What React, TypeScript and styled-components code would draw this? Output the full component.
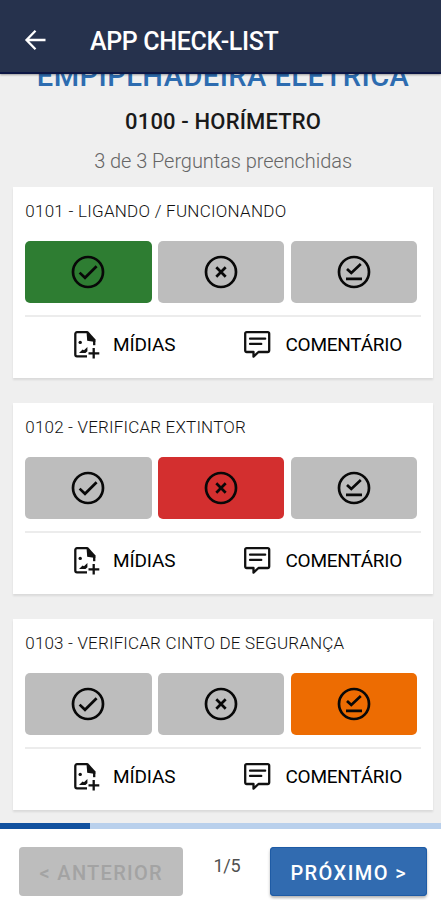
import React from "react";
import styled, { createGlobalStyle } from "styled-components";

const GlobalStyle = createGlobalStyle`
  * { box-sizing: border-box; }
  body { margin: 0; background: #efefef; font-family: Roboto, sans-serif; }
  button { font-family: inherit; border: 0; padding: 0; }
`;

const Screen = styled.div`
  width: 441px;
  height: 900px;
  display: flex;
  flex-direction: column;
  overflow: hidden;
  background: #efefef;
`;

const TopBar = styled.header`
  height: 74px;
  flex: none;
  display: flex;
  align-items: center;
  padding: 8px 0 0 24px;
  background: #26324d;
  border-bottom: 2px solid #0c1644;
  box-shadow: 0 1px 2px rgba(0, 0, 0, 0.35);
  z-index: 1;
`;

const AppTitle = styled.h1`
  margin: 4px 0 0 43px;
  font-size: 25px;
  line-height: 30px;
  font-weight: 500;
  letter-spacing: -0.34px;
  color: #fff;
  white-space: nowrap;
`;

const Content = styled.main`
  flex: 1;
  min-height: 0;
  overflow: hidden;
  display: flex;
  flex-direction: column;
  padding: 0 8px 0 12.6px;
`;

const Equipment = styled.h2`
  margin: -16px 0 0;
  width: 421px;
  height: 36px;
  font-size: 29px;
  line-height: 36px;
  font-weight: 500;
  letter-spacing: 0.48px;
  text-align: center;
  white-space: nowrap;
  color: #2d6cb0;
  flex: none;
`;

const Section = styled.h3`
  margin: 13px 0 0;
  width: 421px;
  font-size: 22px;
  line-height: 30px;
  font-weight: 500;
  letter-spacing: 0.15px;
  text-align: center;
  color: #1a1a1a;
`;

const Progress = styled.p`
  margin: 11px 0 0;
  width: 421px;
  font-size: 20px;
  line-height: 26px;
  font-weight: 300;
  letter-spacing: -0.07px;
  text-align: center;
  color: #666;
`;

const Cards = styled.div`
  display: flex;
  flex-direction: column;
  gap: 25px;
  margin-top: 12.5px;
  width: 420.6px;
`;

const Card = styled.section`
  height: 191px;
  flex: none;
  background: #fff;
  padding: 12.5px 12.4px 0 12.7px;
  box-shadow: 0 2px 2px rgba(0, 0, 0, 0.09);
`;

const Question = styled.div<{ $spacing: number }>`
  height: 24px;
  font-size: 17px;
  line-height: 24px;
  font-weight: 300;
  letter-spacing: ${(p) => p.$spacing}px;
  white-space: nowrap;
  color: #111;
`;

const Answers = styled.div`
  display: grid;
  grid-template-columns: repeat(3, 126.4px);
  gap: 6.3px;
  margin-top: 18px;
`;

const Answer = styled.button<{ $color: string }>`
  height: 61.5px;
  border-radius: 5px;
  background: ${(p) => p.$color};
  display: flex;
  align-items: center;
  justify-content: center;
`;

const Divider = styled.div`
  height: 2px;
  margin-top: 12.5px;
  background: #ececec;
`;

const Actions = styled.div`
  display: flex;
  margin-top: 11.7px;
  padding-left: 47.7px;
`;

const Action = styled.button<{ $width: number; $gap: number; $spacing: number }>`
  width: ${(p) => p.$width}px;
  height: 32px;
  flex: none;
  display: flex;
  align-items: center;
  gap: ${(p) => p.$gap}px;
  background: none;
  font-size: 19px;
  font-weight: 400;
  letter-spacing: ${(p) => p.$spacing}px;
  white-space: nowrap;
  color: #000;
`;

const Track = styled.div`
  height: 6px;
  flex: none;
  background: #b9d0ec;
`;

const Fill = styled.div`
  width: 89.5px;
  height: 6px;
  background: #11519f;
`;

const Footer = styled.footer`
  height: 71.5px;
  flex: none;
  display: flex;
  align-items: flex-start;
  background: #fff;
  padding: 18.5px 14px 0 19.3px;
`;

const NavButton = styled.button<{ $primary?: boolean }>`
  width: ${(p) => (p.$primary ? 156.5 : 164)}px;
  height: 49px;
  flex: none;
  border-radius: 4px;
  background: ${(p) => (p.$primary ? "#316bb0" : "#bdbdbd")};
  box-shadow: ${(p) => (p.$primary ? "inset 0 0 0 1px #1e5ba5, 0 2px 3px rgba(0,0,0,.3)" : "none")};
  color: ${(p) => (p.$primary ? "#fff" : "#a3a3a3")};
  font-size: 20px;
  font-weight: 500;
  letter-spacing: ${(p) => (p.$primary ? 1.42 : 1.3)}px;
  white-space: nowrap;
  padding: 3px 0 0;
`;

const PageCount = styled.span`
  width: 87.2px;
  margin-top: 7px;
  text-align: center;
  font-size: 18px;
  line-height: 24px;
  letter-spacing: -0.3px;
  color: #505050;
`;

const BackIcon = () => (
  <svg width="23" height="22" viewBox="0 0 23 22" fill="none" stroke="#fff" strokeWidth="2.3">
    <path d="M21.5 11H3M11.5 1.8L2.5 11l9 9.2" />
  </svg>
);

const marks = {
  ok: "M-8.4 .6L-3 5.8L8.6-5.8",
  fail: "M-4.7-4.7L4.7 4.7M4.7-4.7L-4.7 4.7",
  partial: "M-7-3.1L-2.7 1L6.8-8M-8 6.8H8",
};

type Kind = keyof typeof marks;

const AnswerIcon = ({ kind }: { kind: Kind }) => (
  <svg width="34" height="34" viewBox="-17 -17 34 34" fill="none" stroke="#080808" strokeWidth="2.7">
    <circle r="15" />
    <path d={marks[kind]} />
  </svg>
);

const MediaIcon = () => (
  <svg width="27" height="29" viewBox="0 0 27 29" fill="none" stroke="#111" strokeWidth="2.3">
    <path d="M14.5 2.2H4a1.7 1.7 0 0 0-1.7 1.7v20.7A1.7 1.7 0 0 0 4 26.3h10" />
    <path d="M21.2 10v5.2" />
    <path d="M13.5 1.2h1.6L22.3 9.2V12L14.2 10.8z" fill="#111" stroke="none" />
    <circle cx="7.2" cy="12.4" r="1.7" fill="#111" stroke="none" />
    <path d="M6 23l3.6-3.4 1.4.7 3.4-3.3v4.2L12.5 23z" fill="#111" stroke="none" />
    <path d="M20.7 18v10.5M15.5 23.3h10.8" />
  </svg>
);

const CommentIcon = () => (
  <svg width="28" height="29" viewBox="0 0 28 29" fill="none" stroke="#111" strokeWidth="2.3" strokeLinejoin="round">
    <path d="M3.6 2.2h21.2a1.4 1.4 0 0 1 1.4 1.4v17a1.4 1.4 0 0 1-1.4 1.4H15.5l-5 4.6V22H3.6a1.4 1.4 0 0 1-1.4-1.4v-17a1.4 1.4 0 0 1 1.4-1.4z" />
    <path d="M7 8.7h15.2M7 13.9h11.3" strokeWidth="2.2" strokeLinecap="round" />
  </svg>
);

const colors: Record<Kind, string> = { ok: "#2e7d32", fail: "#d32f2f", partial: "#ed6c02" };
const kinds: Kind[] = ["ok", "fail", "partial"];

const questions: { text: string; answer: Kind; spacing: number }[] = [
  { text: "0101 - LIGANDO / FUNCIONANDO", answer: "ok", spacing: 0.26 },
  { text: "0102 - VERIFICAR EXTINTOR", answer: "fail", spacing: 0.19 },
  { text: "0103 - VERIFICAR CINTO DE SEGURANÇA", answer: "partial", spacing: 0.18 },
];

export default function App() {
  return (
    <>
      <GlobalStyle />
      <Screen>
        <TopBar>
          <BackIcon />
          <AppTitle>APP CHECK-LIST</AppTitle>
        </TopBar>
        <Content>
          <Equipment>EMPIPLHADEIRA ELETRICA</Equipment>
          <Section>0100 - HORÍMETRO</Section>
          <Progress>3 de 3 Perguntas preenchidas</Progress>
          <Cards>
            {questions.map((q) => (
              <Card key={q.text}>
                <Question $spacing={q.spacing}>{q.text}</Question>
                <Answers>
                  {kinds.map((k) => (
                    <Answer key={k} $color={k === q.answer ? colors[k] : "#bdbdbd"}>
                      <AnswerIcon kind={k} />
                    </Answer>
                  ))}
                </Answers>
                <Divider />
                <Actions>
                  <Action $width={170.5} $gap={13} $spacing={-0.15}>
                    <MediaIcon />
                    MÍDIAS
                  </Action>
                  <Action $width={165} $gap={14} $spacing={-0.25}>
                    <CommentIcon />
                    COMENTÁRIO
                  </Action>
                </Actions>
              </Card>
            ))}
          </Cards>
        </Content>
        <Track>
          <Fill />
        </Track>
        <Footer>
          <NavButton disabled>&lt; ANTERIOR</NavButton>
          <PageCount>1/5</PageCount>
          <NavButton $primary>PRÓXIMO &gt;</NavButton>
        </Footer>
      </Screen>
    </>
  );
}
